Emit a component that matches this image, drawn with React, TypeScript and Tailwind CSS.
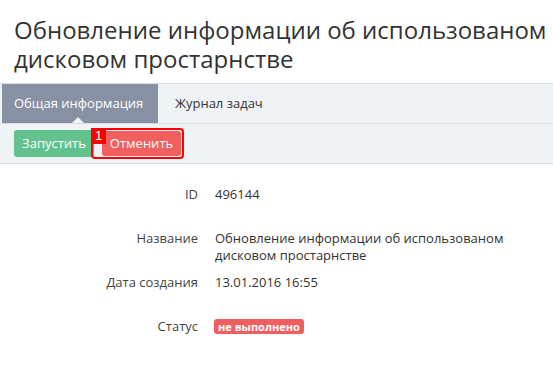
import React from "react";

export default function App() {
  const font = { fontFamily: '"Open Sans", "Noto Sans", sans-serif' };
  return (
    <div className="w-[553px] h-[365px] bg-white overflow-hidden text-[#333]" style={font}>
      <h1 className="pl-[14px] pt-[15px] text-[24px] leading-[29px] font-normal text-[#333] h-[68px] whitespace-nowrap">
        Обновление информации об использованом
        <br />
        дисковом простарнстве
      </h1>
      <div className="mt-[15px] border-t border-[#dadde2] bg-[#f0f3f6] h-[40px] flex pl-[2px]">
        <div className="relative bg-[#8891a3] text-white text-[13px] w-[156px] flex items-center pl-[12px]">
          Общая информация
          <div className="absolute left-[70px] bottom-0 w-0 h-0 border-l-[6px] border-r-[6px] border-b-[6px] border-l-transparent border-r-transparent border-b-[#f0f3f6]" />
        </div>
        <div className="text-[13px] text-[#333] flex items-center pl-[17px]">Журнал задач</div>
      </div>
      <div className="border-t border-b border-[#dadde2] bg-[#f0f3f6] h-[41px] flex items-center pl-[14px] gap-[7px]">
        <button className="h-[27px] w-[80px] rounded-[3px] bg-[#62c28d] text-white text-[13px] flex items-center justify-center">
          Запустить
        </button>
        <div className="relative border-2 border-[#ff0000] rounded-[4px] p-[1px] -ml-[10px]">
          <button className="h-[25px] w-[79px] rounded-[3px] bg-[#f25f5f] text-white text-[13px] flex items-center justify-center ml-[8px]">
            Отменить
          </button>
          <div className="absolute -left-[2px] -top-[2px] w-[15px] h-[16px] bg-[#ff0000] text-white text-[13px] leading-[16px] flex items-center justify-center" style={{ fontFamily: '"Liberation Sans", sans-serif' }}>
            1
          </div>
        </div>
      </div>
      <div className="text-[13px] leading-[17px] mt-[22px]">
        <div className="flex">
          <div className="w-[198px] text-right text-[#444]">ID</div>
          <div className="pl-[17px]">496144</div>
        </div>
        <div className="flex mt-[27px]">
          <div className="w-[198px] text-right text-[#444]">Название</div>
          <div className="pl-[17px] w-[320px]">Обновление информации об использованом дисковом простарнстве</div>
        </div>
        <div className="flex mt-[10px]">
          <div className="w-[198px] text-right text-[#444]">Дата создания</div>
          <div className="pl-[17px]">13.01.2016 16:55</div>
        </div>
        <div className="flex mt-[27px] items-center">
          <div className="w-[198px] text-right text-[#444]">Статус</div>
          <div className="pl-[16px]">
            <span className="inline-block bg-[#f05f5f] text-white text-[11px] font-bold leading-[15px] px-[4px] rounded-[3px]">не выполнено</span>
          </div>
        </div>
      </div>
    </div>
  );
}
